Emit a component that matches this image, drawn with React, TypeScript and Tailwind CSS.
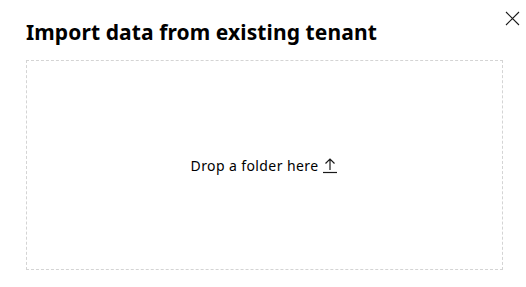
export default function App() {
  return (
    <div
      className="relative h-[287px] w-[526px] bg-white text-black"
      style={{ fontFamily: '"Noto Sans", "Open Sans", sans-serif' }}
    >
      <button
        type="button"
        aria-label="Close"
        className="absolute right-[6px] top-[11px] flex h-[15px] w-[15px] items-center justify-center"
      >
        <svg width="15" height="15" viewBox="0 0 15 15" fill="none">
          <path d="M1 1L14 14M14 1L1 14" stroke="#1a1a1a" strokeWidth="1.1" />
        </svg>
      </button>
      <div className="flex flex-col px-[26px] pt-[17px]">
        <h2 className="text-[21px] font-bold leading-[30px] tracking-[0.1px]">
          Import data from existing tenant
        </h2>
        <div className="mt-[13px] flex h-[210px] w-[477px] items-center justify-center border border-dashed border-[#d4d4d4]">
          <span className="flex items-center gap-[4px] text-[14px] tracking-[0.4px]">
            Drop a folder here
            <svg width="16" height="17" viewBox="0 0 16 17" fill="none">
              <path d="M8 13V2M3.5 6.5L8 2l4.5 4.5" stroke="#1a1a1a" strokeWidth="1.2" />
              <path d="M1 15.5h14" stroke="#1a1a1a" strokeWidth="1.2" />
            </svg>
          </span>
        </div>
      </div>
    </div>
  );
}
